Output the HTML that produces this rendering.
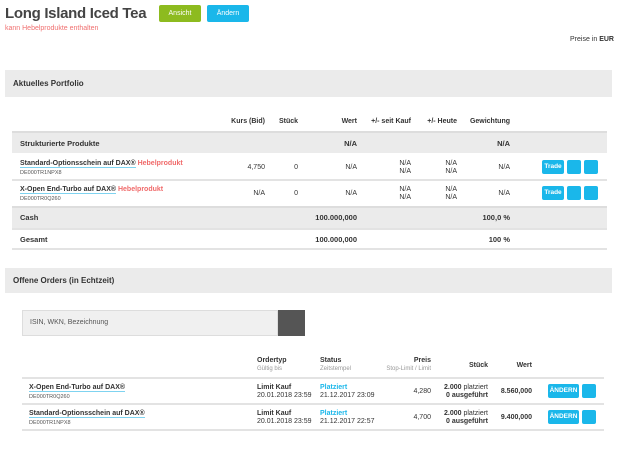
<!DOCTYPE html>
<html><head><meta charset="utf-8"><style>
*{margin:0;padding:0;box-sizing:border-box}
body{width:637px;height:455px;background:#fff;font-family:"Liberation Sans",sans-serif;color:#333;position:relative;overflow:hidden;font-size:7px}
.a{position:absolute;white-space:nowrap}
.r{text-align:right}
.b{font-weight:bold}
.band{position:absolute;background:#ebebeb}
.line{position:absolute;height:2px;background:#e3e3e3}
.btn{position:absolute;background:#1ab7ea;border-radius:2px;color:#fff;font-weight:bold;font-size:6.5px;text-align:center}
.lnk{border-bottom:1px solid #7fd3f0;font-weight:bold}
.red{color:#f06a6a;font-weight:bold}
.isin{font-size:5.5px;color:#555}
.g{color:#999}
</style></head><body>
<div class="a b" style="left:5px;top:5px;font-size:15px;letter-spacing:-0.3px;color:#444">Long Island Iced Tea</div>
<div class="btn" style="left:159px;top:5px;width:42px;height:17px;line-height:17px;background:#8dbb1f;font-size:7px;font-weight:normal">Ansicht</div>
<div class="btn" style="left:207px;top:5px;width:42px;height:17px;line-height:17px;font-size:7px;font-weight:normal">Ändern</div>
<div class="a" style="left:5px;top:25px;color:#f07070;font-size:7px">kann Hebelprodukte enthalten</div>
<div class="a" style="left:570px;top:36px;font-size:7px">Preise in <b>EUR</b></div>

<div class="band" style="left:5px;top:70px;width:607px;height:27px"></div>
<div class="a b" style="left:13px;top:79px;font-size:8px">Aktuelles Portfolio</div>

<div class="a b r" style="left:200px;top:118px;width:65px">Kurs (Bid)</div>
<div class="a b r" style="left:270px;top:118px;width:28px">Stück</div>
<div class="a b r" style="left:310px;top:118px;width:47px">Wert</div>
<div class="a b r" style="left:360px;top:118px;width:51px">+/- seit Kauf</div>
<div class="a b r" style="left:415px;top:118px;width:42px">+/- Heute</div>
<div class="a b r" style="left:460px;top:118px;width:50px">Gewichtung</div>

<div class="band" style="left:12px;top:131px;width:595px;height:22px;border-top:2px solid #ddd"></div>
<div class="a b" style="left:20px;top:139px;font-size:7.5px">Strukturierte Produkte</div>
<div class="a b r" style="left:310px;top:139px;width:47px;font-size:7.5px">N/A</div>
<div class="a b r" style="left:460px;top:139px;width:50px;font-size:7.5px">N/A</div>

<div class="a" style="left:20px;top:160px"><span class="lnk">Standard-Optionsschein auf DAX®</span> <span class="red">Hebelprodukt</span></div>
<div class="a isin" style="left:20px;top:170px">DE000TR1NPX8</div>
<div class="a r" style="left:200px;top:164px;width:65px">4,750</div>
<div class="a r" style="left:270px;top:164px;width:28px">0</div>
<div class="a r" style="left:310px;top:164px;width:47px">N/A</div>
<div class="a r" style="left:360px;top:160px;width:51px;line-height:8px">N/A<br>N/A</div>
<div class="a r" style="left:415px;top:160px;width:42px;line-height:8px">N/A<br>N/A</div>
<div class="a r" style="left:460px;top:164px;width:50px">N/A</div>
<div class="btn" style="left:542px;top:160px;width:22px;height:14px;line-height:14px">Trade</div>
<div class="btn" style="left:567px;top:160px;width:14px;height:14px"></div>
<div class="btn" style="left:584px;top:160px;width:14px;height:14px"></div>
<div class="line" style="left:12px;top:179px;width:595px"></div>

<div class="a" style="left:20px;top:186px"><span class="lnk">X-Open End-Turbo auf DAX®</span> <span class="red">Hebelprodukt</span></div>
<div class="a isin" style="left:20px;top:196px">DE000TR0Q260</div>
<div class="a r" style="left:200px;top:190px;width:65px">N/A</div>
<div class="a r" style="left:270px;top:190px;width:28px">0</div>
<div class="a r" style="left:310px;top:190px;width:47px">N/A</div>
<div class="a r" style="left:360px;top:186px;width:51px;line-height:8px">N/A<br>N/A</div>
<div class="a r" style="left:415px;top:186px;width:42px;line-height:8px">N/A<br>N/A</div>
<div class="a r" style="left:460px;top:190px;width:50px">N/A</div>
<div class="btn" style="left:542px;top:186px;width:22px;height:14px;line-height:14px">Trade</div>
<div class="btn" style="left:567px;top:186px;width:14px;height:14px"></div>
<div class="btn" style="left:584px;top:186px;width:14px;height:14px"></div>

<div class="band" style="left:12px;top:206px;width:595px;height:22px;border-top:2px solid #ddd"></div>
<div class="a b" style="left:20px;top:213px;font-size:7.5px">Cash</div>
<div class="a b r" style="left:280px;top:213px;width:77px;font-size:7.5px">100.000,000</div>
<div class="a b r" style="left:460px;top:213px;width:50px;font-size:7.5px">100,0 %</div>
<div class="line" style="left:12px;top:228px;width:595px"></div>
<div class="a b" style="left:20px;top:235px;font-size:7.5px">Gesamt</div>
<div class="a b r" style="left:280px;top:235px;width:77px;font-size:7.5px">100.000,000</div>
<div class="a b r" style="left:460px;top:235px;width:50px;font-size:7.5px">100 %</div>
<div class="line" style="left:12px;top:248px;width:595px"></div>

<div class="band" style="left:5px;top:268px;width:607px;height:25px"></div>
<div class="a b" style="left:13px;top:276px;font-size:8px">Offene Orders (in Echtzeit)</div>

<div class="a" style="left:22px;top:310px;width:256px;height:26px;background:#f0f0f0;border:1px solid #ddd"></div>
<div class="a" style="left:30px;top:319px;font-size:7px;color:#555">ISIN, WKN, Bezeichnung</div>
<div class="a" style="left:278px;top:310px;width:27px;height:26px;background:#555"></div>

<div class="a b" style="left:257px;top:357px">Ordertyp</div>
<div class="a g" style="left:257px;top:366px;font-size:6px">Gültig bis</div>
<div class="a b" style="left:320px;top:357px">Status</div>
<div class="a g" style="left:320px;top:366px;font-size:6px">Zeitstempel</div>
<div class="a b r" style="left:370px;top:357px;width:61px">Preis</div>
<div class="a g r" style="left:370px;top:366px;width:61px;font-size:6px">Stop-Limit / Limit</div>
<div class="a b r" style="left:450px;top:362px;width:38px">Stück</div>
<div class="a b r" style="left:500px;top:362px;width:32px">Wert</div>
<div class="line" style="left:22px;top:377px;width:582px"></div>

<div class="a" style="left:29px;top:384px"><span class="lnk">X-Open End-Turbo auf DAX®</span></div>
<div class="a isin" style="left:29px;top:394px">DE000TR0Q260</div>
<div class="a b" style="left:257px;top:384px">Limit Kauf</div>
<div class="a" style="left:257px;top:392px">20.01.2018 23:59</div>
<div class="a b" style="left:320px;top:384px;color:#1ab7ea">Platziert</div>
<div class="a" style="left:320px;top:392px">21.12.2017 23:09</div>
<div class="a r" style="left:390px;top:388px;width:41px">4,280</div>
<div class="a r" style="left:430px;top:384px;width:58px;line-height:8px"><b>2.000</b> platziert<br><b>0 ausgeführt</b></div>
<div class="a b r" style="left:490px;top:388px;width:42px">8.560,000</div>
<div class="btn" style="left:548px;top:384px;width:31px;height:14px;line-height:14px">ÄNDERN</div>
<div class="btn" style="left:582px;top:384px;width:14px;height:14px"></div>
<div class="line" style="left:22px;top:403px;width:582px"></div>

<div class="a" style="left:29px;top:410px"><span class="lnk">Standard-Optionsschein auf DAX®</span></div>
<div class="a isin" style="left:29px;top:420px">DE000TR1NPX8</div>
<div class="a b" style="left:257px;top:410px">Limit Kauf</div>
<div class="a" style="left:257px;top:418px">20.01.2018 23:59</div>
<div class="a b" style="left:320px;top:410px;color:#1ab7ea">Platziert</div>
<div class="a" style="left:320px;top:418px">21.12.2017 22:57</div>
<div class="a r" style="left:390px;top:414px;width:41px">4,700</div>
<div class="a r" style="left:430px;top:410px;width:58px;line-height:8px"><b>2.000</b> platziert<br><b>0 ausgeführt</b></div>
<div class="a b r" style="left:490px;top:414px;width:42px">9.400,000</div>
<div class="btn" style="left:548px;top:410px;width:31px;height:14px;line-height:14px">ÄNDERN</div>
<div class="btn" style="left:582px;top:410px;width:14px;height:14px"></div>
<div class="line" style="left:22px;top:429px;width:582px"></div>
</body></html>
